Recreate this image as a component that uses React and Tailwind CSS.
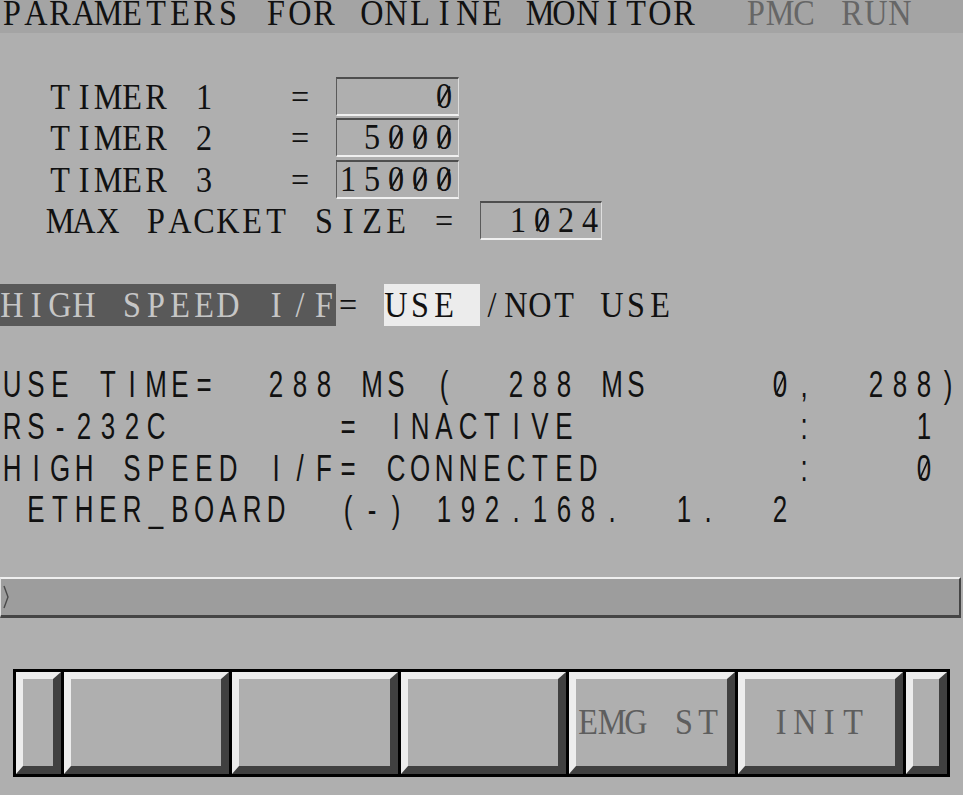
import React from 'react';

// one 24px character cell per glyph, like the CNC text grid
const SERIF = "font-['Liberation_Serif',serif] text-[35px] leading-none";
const SANS = "font-['Liberation_Sans',sans-serif] text-[36px] leading-none";

function Cells({ text, sans = false }) {
  const scale = sans ? 'scale-x-[0.72]' : 'scale-x-[0.92]';
  return text.split('').map((ch, i) => (
    <span key={i} className={`relative flex w-[24px] shrink-0 justify-center ${scale}`}>
      {ch === ' ' ? '\u00a0' : ch}
      {ch === '0' && (
        <span className="absolute left-1/2 top-1/2 h-[23px] w-[1.5px] -translate-x-1/2 -translate-y-1/2 rotate-[32deg] bg-current" />
      )}
    </span>
  ));
}

function Row({ children, className = '' }) {
  return <div className={`flex h-[41.6px] items-center ${className}`}>{children}</div>;
}

const TIMERS = [
  { label: '  TIMER 1   = ', value: '    0' },
  { label: '  TIMER 2   = ', value: ' 5000' },
  { label: '  TIMER 3   = ', value: '15000' },
];

const STATUS = [
  'USE TIME=  288 MS (  288 MS     0,  288)',
  'RS-232C       = INACTIVE         :    1',
  'HIGH SPEED I/F= CONNECTED        :    0',
  ' ETHER_BOARD  (-) 192.168.  1.  2',
];

const KEYS = [
  { w: 'w-[45px]', label: '' },
  { w: 'w-[165px]', label: '' },
  { w: 'w-[166px]', label: '' },
  { w: 'w-[165px]', label: '' },
  { w: 'w-[166px]', label: 'EMG ST' },
  { w: 'w-[165px]', label: ' INIT' },
  { w: 'w-[41px]', label: '' },
];

function ValueBox({ value, className = '' }) {
  return (
    <div
      className={`flex h-[39px] items-center border-t-2 border-l border-b-2 border-r border-t-[#4e4e4e] border-l-[#5a5a5a] border-b-[#f0f0f0] border-r-[#dedede] ${className}`}
    >
      <Cells text={value} />
    </div>
  );
}

export default function App() {
  return (
    <div className={`h-[795px] w-[963px] overflow-hidden bg-[#afafaf] text-[#111] ${SERIF}`}>
      {/* Title bar */}
      <div className="h-[33px] bg-[#a4a4a4] leading-[27px]">
        <div className="flex h-[27px] items-center">
          <Cells text="PARAMETERS FOR ONLINE MONITOR  " />
          <span className="flex text-[#666]">
            <Cells text="PMC RUN" />
          </span>
        </div>
      </div>

      <div className="h-[43.4px]" />

      {/* Timer parameters */}
      {TIMERS.map((t) => (
        <Row key={t.label}>
          <Cells text={t.label} />
          <ValueBox value={t.value} className="mb-[2px] w-[123px] justify-end pr-[2px]" />
        </Row>
      ))}
      <Row>
        <Cells text="  MAX PACKET SIZE = " />
        <ValueBox value=" 1024" className="mb-[2px] w-[122px] pl-px" />
      </Row>

      <Row />

      {/* High speed interface selection */}
      <Row className="items-stretch">
        <span className="flex items-center bg-[#595959] text-[#c6c6c6]">
          <Cells text="HIGH SPEED I/F" />
        </span>
        <span className="flex items-center">
          <Cells text="= " />
        </span>
        <span className="flex items-center bg-[#ececec]">
          <Cells text="USE " />
        </span>
        <span className="flex items-center">
          <Cells text="/NOT USE" />
        </span>
      </Row>

      <Row />

      {/* Status lines */}
      {STATUS.map((line) => (
        <Row key={line} className={`${SANS} -translate-y-[3px]`}>
          <Cells text={line} sans />
        </Row>
      ))}

      <div className="h-[43px]" />

      {/* Input line */}
      <div className="flex h-[41px] w-[961px] items-center border-t-2 border-l border-b-[3px] border-r-2 border-t-[#efefef] border-l-[#e0e0e0] border-b-[#454545] border-r-[#444] bg-[#9d9d9d]">
        <svg width="10" height="26" viewBox="0 0 10 26" className="ml-px">
          <polyline points="2,2 6,13 2,24" fill="none" stroke="#4a4a4a" strokeWidth="1.4" />
        </svg>
      </div>

      <div className="h-[51px]" />

      {/* Soft keys */}
      <div className="ml-[13px] flex h-[108px] w-[937px] gap-[3px] bg-black p-[3px]">
        {KEYS.map((k, i) => (
          <div
            key={i}
            className={`flex items-center border-t-[7px] border-l-[7px] border-r-[8px] border-b-[8px] border-t-[#ededed] border-l-[#ededed] border-r-[#404040] border-b-[#404040] bg-[#afafaf] text-[#5e5e5e] ${k.w}`}
          >
            {k.label && <Cells text={k.label} />}
          </div>
        ))}
      </div>
    </div>
  );
}
